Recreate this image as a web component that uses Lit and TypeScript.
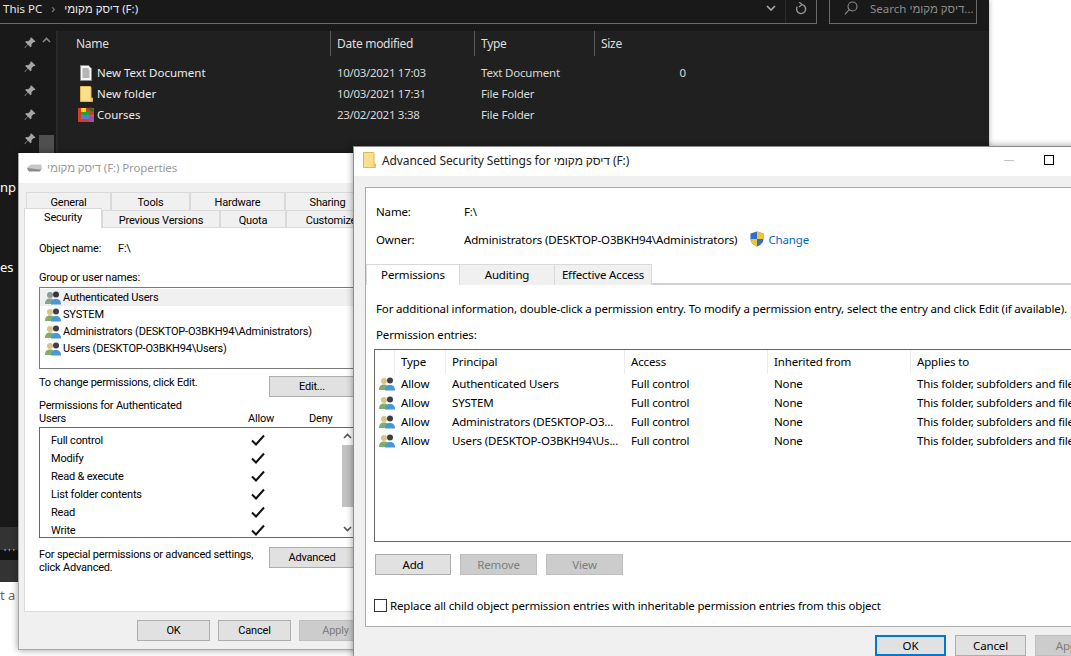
import { LitElement, html, css, svg } from "lit";
import { customElement } from "lit/decorators.js";

const HE = "דיסק מקומי";

const usersIcon = (blue = "#4a97d6") => html`<svg class="ic-users" viewBox="0 0 16 14" width="16" height="14">
  <circle cx="5" cy="4" r="3" fill="#d8c489"/><path d="M0 13c0-4 2-5.5 5-5.5s5 1.500 5 5.500z" fill="#7fae6a"/>
  <circle cx="11" cy="3.600" r="3" fill="#3d3f48"/><path d="M6 13.500c0-4 2-5.500 5-5.500s5 1.500 5 5.500z" fill="${blue}"/>
</svg>`;
const usersGrey = html`<svg class="ic-users" viewBox="0 0 16 14" width="16" height="14">
  <circle cx="5" cy="4" r="3" fill="#8f9a94"/><path d="M0 13c0-4 2-5.500 5-5.500s5 1.500 5 5.500z" fill="#7fa58e"/>
  <circle cx="11" cy="3.600" r="3" fill="#33363f"/><path d="M6 13.500c0-4 2-5.500 5-5.500s5 1.500 5 5.500z" fill="#4a97d6"/>
</svg>`;
const check = html`<svg viewBox="0 0 14 12" width="14" height="12"><path d="M1 6.500l4 4L13 1.500" fill="none" stroke="#111" stroke-width="2"/></svg>`;
const pin = html`<svg viewBox="0 0 12 12" width="12" height="12"><path d="M7.500 0.500l4 4-1 .8-.8-.3-2.300 2.300.2 2-1 1L4 7.800 1 11l-.5-.5L3.700 7.500 1.200 5l1-1 2 .2L6.500 1.900l-.3-.8z" fill="#a6a6a6"/></svg>`;
const folder = (w = 13, h = 16) => html`<svg viewBox="0 0 13 16" width="${w}" height="${h}"><path d="M0.500 0.500h10l.5 1v10.500h1.500v3.500H.5z" fill="#fbe08c" stroke="#e0b950" stroke-width="1"/><path d="M11 12v3.500" stroke="#e0b950"/></svg>`;
const doc = html`<svg viewBox="0 0 12 16" width="12" height="16"><path d="M.5.500h8l3 3v12H.5z" fill="#f5f5f5" stroke="#8c8c8c"/><path d="M2.500 4h6M2.500 6h7M2.500 8h7M2.500 10h7M2.500 12h7" stroke="#777"/></svg>`;
const courses = html`<svg viewBox="0 0 16 15" width="16" height="15"><rect x="0" y="1" width="16" height="14" fill="#d8392b"/><rect x="3" y="1" width="5" height="5" fill="#f5d90a"/><rect x="3" y="5" width="8" height="4" fill="#16a832"/><rect x="3" y="8" width="13" height="4" fill="#5a7bd0"/><rect x="11" y="9" width="5" height="6" fill="#a0509c"/><path d="M11 1l4 3" stroke="#0f7c17" stroke-width="2.500"/></svg>`;
const drive = html`<svg viewBox="0 0 15 8" width="15" height="8"><path d="M0 3.500L4 .5h10l1 3-2 3.500H1z" fill="#c9c9c9"/><path d="M0 4l13 1.500L15 3.500 13 7.500H2z" fill="#8a8a8a"/></svg>`;
const shield = html`<svg viewBox="0 0 14 16" width="14" height="16"><path d="M7 .5L13.500 2.500V8c0 3.500-3 6-6.500 7.500C3.500 14 .5 11.500.5 8V2.500z" fill="#2b6fd0"/><path d="M7 .5L13.500 2.500V8H7zM7 8v7.500C3.500 14 .5 11.500.5 8z" fill="#f4c430"/></svg>`;
const arrowUp = html`<svg viewBox="0 0 9 6" width="9" height="6"><path d="M1 5l3.500-3.500L8 5" fill="none" stroke="#555" stroke-width="1.600"/></svg>`;
const arrowDown = html`<svg viewBox="0 0 9 6" width="9" height="6"><path d="M1 1l3.500 3.500L8 1" fill="none" stroke="#555" stroke-width="1.600"/></svg>`;

const files = [
  { n: "New Text Document", d: "10/03/2021 17:03", t: "Text Document", s: "0", i: doc },
  { n: "New folder", d: "10/03/2021 17:31", t: "File Folder", s: "", i: folder() },
  { n: "Courses", d: "23/02/2021 3:38", t: "File Folder", s: "", i: courses },
];
const perms = ["Full control", "Modify", "Read & execute", "List folder contents", "Read", "Write"];
const groups = ["Authenticated Users", "SYSTEM", "Administrators (DESKTOP-O3BKH94\\Administrators)", "Users (DESKTOP-O3BKH94\\Users)"];
const entries = ["Authenticated Users", "SYSTEM", "Administrators (DESKTOP-O3...", "Users (DESKTOP-O3BKH94\\Us..."];

@customElement("app-root")
export class AppRoot extends LitElement {
  static styles = css`
    :host { display: block; position: relative; width: 1071px; height: 656px; overflow: hidden; background: #fff;
      font-family: "Noto Sans", "Liberation Sans", "DejaVu Sans", sans-serif; font-size: 11.5px; color: #000; }
    * { box-sizing: border-box; }
    svg { display: block; flex: none; }

    /* explorer */
    .explorer { width: 989px; height: 527px; background: #191919; color: #e8e8e8; display: flex; flex-direction: column; box-shadow: 0 0 5px rgba(0,0,0,.35); }
    .top { height: 31px; display: flex; gap: 12px; align-items: flex-start; flex: none; }
    .addr { width: 817px; height: 24px; border-right: 1px solid #6b6b6b; border-bottom: 1px solid #6b6b6b; display: flex; align-items: center; padding: 0 0 7px 3px; }
    .addr .chev { margin: 0 9px 0 9px; color: #8a8a8a; font-size: 13px; }
    .addr .sp { flex: 1; }
    .addr .drop { width: 30px; display: flex; justify-content: center; border-right: 1px solid #2b2b2b; height: 23px; align-items: center; padding-bottom: 7px; margin-bottom: -7px; }
    .addr .refresh { width: 30px; display: flex; justify-content: center; }
    .search { width: 148px; height: 24px; border: 1px solid #6b6b6b; border-top: 0; display: flex; align-items: center; gap: 12px; padding: 0 0 7px 14px; color: #8c8c8c; white-space: nowrap; overflow: hidden; }
    .main { flex: 1; display: flex; min-height: 0; }
    .nav { width: 58px; flex: none; display: flex; border-right: 2px solid #2a2a2a; }
    .navlist { width: 39px; flex: none; color: #fff; font-size: 13px; }
    .pinrow { height: 24px; display: flex; align-items: center; padding-left: 24px; }
    .navtxt { height: 20px; line-height: 20px; }
    .navtxt.a { margin-top: 26px; }
    .navtxt.b { margin-top: 60px; }
    .navbar { width: 15px; display: flex; flex-direction: column; align-items: center; padding-top: 6px; }
    .navbar .thumb { width: 15px; height: 60px; background: #4f4f4f; margin-top: 92px; }
    .content { flex: 1; background: #202020; }
    .hdr, .frow { display: grid; grid-template-columns: 273px 144px 120px 91px; }
    .hdr { height: 25px; color: #dfdfdf; font-size: 12px; letter-spacing: -.3px; }
    .hdr > div { border-right: 1px solid #5a5a5a; padding: 4px 0 0 6px; line-height: 18px; height: 25px; }
    .hdr > div:first-child { padding-left: 18px; }
    .hdr > div:last-child { border-right: 0; }
    .flist { padding-top: 6px; }
    .frow { height: 21px; align-items: center; color: #ececec; }
    .frow .nm { display: flex; align-items: center; padding-left: 20px; gap: 3px; }
    .frow .ico { width: 16px; display: flex; justify-content: center; }
    .frow .col { padding-left: 6px; color: #d8d8d8; letter-spacing: -.2px; }
    .frow .col.d { letter-spacing: -.3px; }
    .frow .sz { text-align: right; }

    .strip { width: 989px; height: 23px; background: #333; }
    .strip.blk { height: 10px; background: #111; color: #ddd; font-size: 9px; line-height: 6px; padding-left: 4px; }
    .strip.end { height: 22px; }
    .below { padding-top: 4px; color: #666; font-size: 13px; line-height: 18px; }

    /* dialogs */
    .win { position: absolute; background: #f0f0f0; box-shadow: 0 0 7px rgba(0,0,0,.4); display: flex; flex-direction: column; border: 1px solid #8c8c8c; border-width: 0 1px 1px 1px; }
    .title { height: 30px; flex: none; background: #fff; display: flex; align-items: center; }

    .props { left: 18px; top: 153px; width: 390px; height: 497px; border-color: #aaa; border-top: 0; font-family: Roboto, "Liberation Sans", "DejaVu Sans", sans-serif; font-size: 11px; letter-spacing: -.2px; }
    .props .title { padding-left: 8px; gap: 5px; color: #9a9a9a; font-family: "Noto Sans", "Liberation Sans", sans-serif; font-size: 11.5px; letter-spacing: -.1px; padding-bottom: 1px; }
    .ptabs { padding: 9px 0 0 5px; height: 45px; flex: none; }
    .prow { display: flex; height: 18px; margin-left: 2px; }
    .prow.two { margin: -2px 0 0 0; height: 20px; align-items: flex-end; }
    .pt { background: #f0f0f0; border: 1px solid #d9d9d9; border-bottom: 0; display: flex; align-items: center; justify-content: center; height: 18px; padding-top: 1px; }
    .pt.act { background: #fff; height: 20px; padding-bottom: 3px; position: relative; z-index: 1; }
    .ppage { background: #fff; margin: -1px 0 0 5px; height: 385px; flex: none; padding: 11px 0 0 14px; border: 1px solid #d9d9d9; border-right: 0; display: flex; flex-direction: column; }
    .objname { display: flex; height: 18px; align-items: center; }
    .objname .l { width: 79px; }
    .gl { margin-top: 12px; height: 18px; line-height: 18px; }
    .glist { width: 330px; height: 82px; border: 1px solid #7a7a7a; padding-top: 1px; flex: none; }
    .grow { height: 17px; display: flex; align-items: center; gap: 2px; padding-left: 5px; white-space: nowrap; }
    .grow.sel { background: #f0f0f0; }
    .edit { display: flex; justify-content: space-between; margin-top: 7px; height: 21px; width: 316px; }
    .edit .t { line-height: 14px; }
    .btn { background: #e1e1e1; border: 1px solid #adadad; display: flex; align-items: center; justify-content: center; height: 21px; flex: none; }
    .btn.dis { background: #cccccc; border-color: #bfbfbf; color: #7d7d7d; }
    .btn.pw { width: 86px; }
    .phead { display: grid; grid-template-columns: 209px 61px 46px; line-height: 13px; height: 30px; align-items: end; padding-bottom: 2px; }
    .pbox { width: 315px; height: 111px; border: 1px solid #666; flex: none; display: flex; overflow: hidden; }
    .pcol { flex: 1; padding: 3px 0 0 11px; height: 109px; overflow: hidden; }
    .prm { display: grid; grid-template-columns: 200px 20px; height: 18px; align-items: center; white-space: nowrap; }
    .vbar { width: 11px; flex: none; display: flex; flex-direction: column; align-items: center; }
    .vbar .thumb { width: 11px; height: 62px; background: #c2c2c2; margin: 6px 0 19px; }
    .vbar .up { margin-top: 5px; }
    .adv { display: flex; justify-content: space-between; width: 316px; margin-top: 8px; line-height: 13px; padding-top: 1px; }
    .adv .t { padding-top: 1px; }
    .pfoot { flex: 1; display: flex; gap: 8px; padding: 8px 0 0 118px; }
    .pfoot .btn { width: 73px; }

    .advw { left: 353px; top: 146px; width: 760px; height: 530px; border-top: 1px solid #8c8c8c; letter-spacing: -.15px; }
    .advw .title { padding-left: 9px; gap: 6px; color: #222; height: 29px; padding-bottom: 3px; font-size: 12px; letter-spacing: -.1px; }
    .advw .sp { flex: 1; }
    .winctl { display: flex; align-items: center; padding-right: 58px; gap: 30px; }
    .mini { width: 10px; height: 1px; background: #c4c4c4; }
    .maxi { width: 10px; height: 10px; border: 1px solid #000; }
    .apage { background: #fff; border: 1px solid #ababab; margin: 11px 0 0 11px; height: 440px; flex: none; padding: 0 0 0 10px; display: flex; flex-direction: column; }
    .aline { display: flex; align-items: center; height: 18px; white-space: nowrap; }
    .aline .l { width: 88px; }
    .aline.a { margin-top: 14px; }
    .aline.b { margin-top: 10px; }
    .aline a { color: #0067c0; text-decoration: none; margin-left: 4px; }
    .aline .sh { margin-left: 13px; }
    .atabs { display: flex; margin: 16px 0 0 -10px; height: 21px; border-bottom: 2px solid #d2d2d2; flex: none; }
    .at { border: 1px solid #d9d9d9; border-bottom: 0; background: #f0f0f0; display: flex; align-items: center; justify-content: center; height: 21px; margin-left: -1px; padding-bottom: 2px; }
    .at.act { background: #fff; margin-left: 0; height: 21px; }
    .atxt { margin-top: 15px; height: 18px; line-height: 18px; white-space: nowrap; }
    .atxt.s { margin-top: 8px; }
    .alist { border: 1px solid #666; border-right: 0; margin: 5px 0 0 -2px; height: 193px; flex: none; }
    .ahead, .arow { display: grid; grid-template-columns: 20px 51px 179px 143px 143px 200px; white-space: nowrap; }
    .ahead { height: 24px; }
    .ahead > div { border-right: 1px solid #ececec; padding-left: 6px; line-height: 24px; overflow: hidden; }
    .arow { height: 19px; align-items: center; }
    .arow > div { padding-left: 6px; overflow: hidden; }
    .arow > .u { padding-left: 4px; }
    .abtns { display: flex; gap: 9px; margin: 12px 0 0 -1px; }
    .abtns .btn { width: 77px; }
    .abtns .btn:first-child { width: 76px; }
    .chk { display: flex; align-items: center; gap: 3px; margin: 23px 0 0 -2px; white-space: nowrap; }
    .box { width: 13px; height: 13px; border: 1px solid #333; background: #fff; flex: none; }
    .afoot { display: flex; gap: 9px; padding: 8px 0 0 521px; }
    .afoot .btn { width: 71px; }
    .afoot .btn.def { border: 2px solid #0078d7; }
  `;

  render() {
    return html`
      <section class="explorer">
        <div class="top">
          <div class="addr">
            <span>This PC</span><span class="chev">›</span><span>${HE} (F:)</span><span class="sp"></span>
            <span class="drop"><svg viewBox="0 0 10 6" width="10" height="6"><path d="M1 1l4 4 4-4" fill="none" stroke="#aaa" stroke-width="1.600"/></svg></span>
            <span class="refresh"><svg viewBox="0 0 12 13" width="12" height="13"><path d="M6 2.500a4.500 4.500 0 1 1-3.800 2.200" fill="none" stroke="#8f8f8f" stroke-width="1.500"/><path d="M4 0l3 2.500L4 5" fill="none" stroke="#8f8f8f" stroke-width="1.300"/></svg></span>
          </div>
          <div class="search">
            <svg viewBox="0 0 14 14" width="14" height="14"><circle cx="8.500" cy="5.500" r="4.500" fill="none" stroke="#8c8c8c" stroke-width="1.100"/><path d="M5.300 8.700L.8 13.300" stroke="#8c8c8c" stroke-width="1.200"/></svg>
            <span>Search ${HE}...</span>
          </div>
        </div>
        <div class="main">
          <div class="nav">
            <div class="navlist">
              ${[0, 1, 2, 3, 4].map(() => html`<div class="pinrow">${pin}</div>`)}
              <div class="navtxt a">np</div>
              <div class="navtxt b">es</div>
            </div>
            <div class="navbar">${arrowUpDark()}<div class="thumb"></div></div>
          </div>
          <div class="content">
            <div class="hdr"><div>Name</div><div>Date modified</div><div>Type</div><div>Size</div></div>
            <div class="flist">
              ${files.map((f) => html`<div class="frow">
                <div class="nm"><span class="ico">${f.i}</span><span>${f.n}</span></div>
                <div class="col d">${f.d}</div><div class="col">${f.t}</div><div class="col sz">${f.s}</div>
              </div>`)}
            </div>
          </div>
        </div>
      </section>
      <div class="strip"></div>
      <div class="strip blk">' ' '</div>
      <div class="strip end"></div>
      <div class="below">t a c</div>

      <section class="win props">
        <div class="title">${drive}<span>${HE} (F:) Properties</span></div>
        <div class="ptabs">
          <div class="prow">
            ${[["General", 85], ["Tools", 79], ["Hardware", 95], ["Sharing", 85]].map(([t, w]) => this.tab(t as string, w as number))}
          </div>
          <div class="prow two">
            <div class="pt act" style="width:78px">Security</div>
            ${[["Previous Versions", 118], ["Quota", 66], ["Customize", 90]].map(([t, w]) => this.tab(t as string, w as number))}
          </div>
        </div>
        <div class="ppage">
          <div class="objname"><span class="l">Object name:</span><span>F:\\</span></div>
          <div class="gl">Group or user names:</div>
          <div class="glist">
            ${groups.map((g, i) => html`<div class="grow ${i === 0 ? "sel" : ""}">${i === 0 ? usersGrey : usersIcon()}<span>${g}</span></div>`)}
          </div>
          <div class="edit"><span class="t">To change permissions, click Edit.</span><div class="btn pw">Edit...</div></div>
          <div class="phead"><div>Permissions for Authenticated<br />Users</div><div>Allow</div><div>Deny</div></div>
          <div class="pbox">
            <div class="pcol">${perms.map((p) => html`<div class="prm"><span>${p}</span>${check}</div>`)}</div>
            <div class="vbar"><span class="up">${arrowUp}</span><div class="thumb"></div>${arrowDown}</div>
          </div>
          <div class="adv"><span class="t">For special permissions or advanced settings,<br />click Advanced.</span><div class="btn pw">Advanced</div></div>
        </div>
        <div class="pfoot"><div class="btn">OK</div><div class="btn">Cancel</div><div class="btn dis">Apply</div></div>
      </section>

      <section class="win advw">
        <div class="title">${folder(13, 16)}<span>Advanced Security Settings for ${HE} (F:)</span><span class="sp"></span>
          <div class="winctl"><div class="mini"></div><div class="maxi"></div></div></div>
        <div class="apage">
          <div class="aline a"><span class="l">Name:</span><span>F:\\</span></div>
          <div class="aline b"><span class="l">Owner:</span><span>Administrators (DESKTOP-O3BKH94\\Administrators)</span><span class="sh">${shield}</span><a>Change</a></div>
          <div class="atabs">
            <div class="at act" style="width:94px">Permissions</div>
            <div class="at" style="width:96px">Auditing</div>
            <div class="at" style="width:98px">Effective Access</div>
          </div>
          <div class="atxt">For additional information, double-click a permission entry. To modify a permission entry, select the entry and click Edit (if available).</div>
          <div class="atxt s">Permission entries:</div>
          <div class="alist">
            <div class="ahead"><div></div><div>Type</div><div>Principal</div><div>Access</div><div>Inherited from</div><div>Applies to</div></div>
            <div>
              ${entries.map((e) => html`<div class="arow"><div class="u">${usersIcon()}</div><div>Allow</div><div>${e}</div><div>Full control</div><div>None</div><div>This folder, subfolders and files</div></div>`)}
            </div>
          </div>
          <div class="abtns"><div class="btn">Add</div><div class="btn dis">Remove</div><div class="btn dis">View</div></div>
          <div class="chk"><span class="box"></span><span>Replace all child object permission entries with inheritable permission entries from this object</span></div>
        </div>
        <div class="afoot"><div class="btn def">OK</div><div class="btn">Cancel</div><div class="btn dis">Apply</div></div>
      </section>
    `;
  }

  private tab(t: string, w: number) {
    return html`<div class="pt" style="width:${w}px">${t}</div>`;
  }
}

function arrowUpDark() {
  return html`<svg viewBox="0 0 9 6" width="9" height="6">${svg`<path d="M1 5l3.500-3.500L8 5" fill="none" stroke="#8a8a8a" stroke-width="1.600"/>`}</svg>`;
}
